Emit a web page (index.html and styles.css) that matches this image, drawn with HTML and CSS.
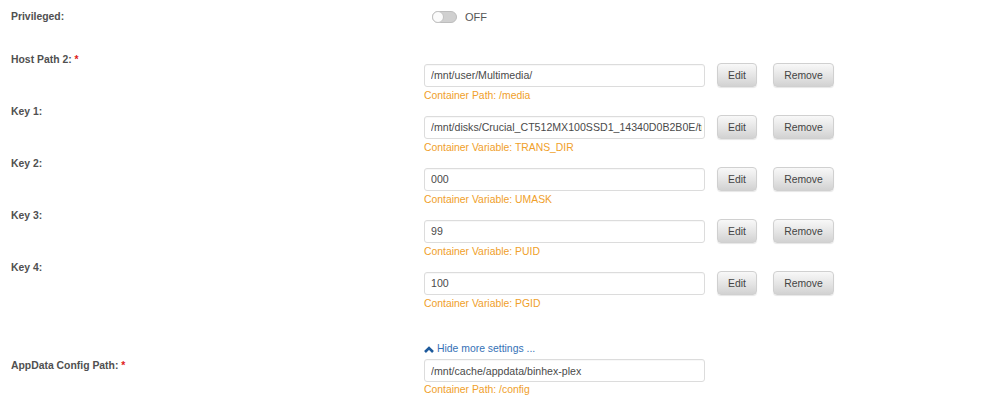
FILE: index.html
```html
<!DOCTYPE html>
<html>
<head>
  <title>Docker Container Settings</title>
  <link rel="stylesheet" href="styles.css">
</head>
<body>
  <div class="form">
    <div class="row row-privileged">
      <div class="label">Privileged:</div>
      <div class="field field-toggle">
        <span class="switch"><span class="knob"></span></span>
        <span class="switch-text">OFF</span>
      </div>
    </div>

    <div class="row row-config">
      <div class="label">Host Path 2: <span class="req">*</span></div>
      <div class="field">
        <div class="controls">
          <input class="text" type="text" value="/mnt/user/Multimedia/">
          <button class="btn btn-edit">Edit</button>
          <button class="btn btn-remove">Remove</button>
        </div>
        <div class="note">Container Path: /media</div>
      </div>
    </div>

    <div class="row row-config">
      <div class="label">Key 1:</div>
      <div class="field">
        <div class="controls">
          <input class="text" type="text" value="/mnt/disks/Crucial_CT512MX100SSD1_14340D0B2B0E/transcode">
          <button class="btn btn-edit">Edit</button>
          <button class="btn btn-remove">Remove</button>
        </div>
        <div class="note">Container Variable: TRANS_DIR</div>
      </div>
    </div>

    <div class="row row-config">
      <div class="label">Key 2:</div>
      <div class="field">
        <div class="controls">
          <input class="text" type="text" value="000">
          <button class="btn btn-edit">Edit</button>
          <button class="btn btn-remove">Remove</button>
        </div>
        <div class="note">Container Variable: UMASK</div>
      </div>
    </div>

    <div class="row row-config">
      <div class="label">Key 3:</div>
      <div class="field">
        <div class="controls">
          <input class="text" type="text" value="99">
          <button class="btn btn-edit">Edit</button>
          <button class="btn btn-remove">Remove</button>
        </div>
        <div class="note">Container Variable: PUID</div>
      </div>
    </div>

    <div class="row row-config">
      <div class="label">Key 4:</div>
      <div class="field">
        <div class="controls">
          <input class="text" type="text" value="100">
          <button class="btn btn-edit">Edit</button>
          <button class="btn btn-remove">Remove</button>
        </div>
        <div class="note">Container Variable: PGID</div>
      </div>
    </div>

    <div class="row row-more">
      <div class="label"></div>
      <div class="field">
        <a class="more-link" href="#">
          <svg class="chevron" width="10" height="7" viewBox="0 0 10 7">
            <path d="M1 6 L5 2 L9 6" fill="none" stroke="#1e5a9c" stroke-width="2.6"/>
          </svg>Hide more settings ...</a>
      </div>
    </div>

    <div class="row row-path">
      <div class="label">AppData Config Path: <span class="req">*</span></div>
      <div class="field">
        <input class="text" type="text" value="/mnt/cache/appdata/binhex-plex">
        <div class="note">Container Path: /config</div>
      </div>
    </div>
  </div>
</body>
</html>
```

FILE: styles.css
```css
* {
  margin: 0;
  padding: 0;
  box-sizing: border-box;
}

body {
  font-family: 'Liberation Sans', Arial, sans-serif;
  font-size: 10.4px;
  color: #505050;
  background: #ffffff;
  width: 1000px;
  height: 409px;
  overflow: hidden;
}

.form {
  padding: 9px 0 0 11px;
}

.row {
  display: flex;
}

.label {
  width: 413px;
  flex-shrink: 0;
  font-weight: bold;
  line-height: 16px;
  color: #505050;
}

.req {
  color: #e01b1b;
}

/* Privileged switch */
.row-privileged {
  height: 43px;
}

.field-toggle {
  display: flex;
  align-items: center;
  height: 16px;
  padding-left: 8px;
}

.switch {
  display: inline-block;
  position: relative;
  width: 25px;
  height: 12px;
  border-radius: 6px;
  background: #d0d0d0;
  border: 1px solid #bdbdbd;
}

.knob {
  position: absolute;
  top: -1px;
  left: -1px;
  width: 12px;
  height: 12px;
  border-radius: 50%;
  background: #fbfbfb;
  border: 1px solid #c2c2c2;
}

.switch-text {
  margin-left: 8px;
  font-size: 11px;
  color: #555;
}

/* Config rows */
.row-config {
  height: 52px;
}

.row-config .field {
  padding-top: 11px;
}

.controls {
  display: flex;
  align-items: center;
  height: 24px;
}

.text {
  width: 281px;
  height: 23px;
  padding: 0 2px 0 6px;
  font-family: 'Liberation Sans', Arial, sans-serif;
  font-size: 10.6px;
  color: #4a4a4a;
  background: #fff;
  border: 1px solid #dcdcdc;
  border-radius: 3px;
  box-shadow: inset 0 1px 1px rgba(0, 0, 0, 0.03);
  outline: none;
}

.btn {
  height: 24px;
  font-family: 'Liberation Sans', Arial, sans-serif;
  font-size: 10.4px;
  color: #444;
  background: linear-gradient(to bottom, #f8f8f8 0%, #e4e4e4 55%, #d2d2d2 100%);
  border: 1px solid #d0d0d0;
  border-radius: 4px;
  box-shadow: 0 1px 1px rgba(0, 0, 0, 0.1);
  cursor: pointer;
}

.btn-edit {
  width: 40px;
  margin-left: 12px;
}

.btn-remove {
  width: 61px;
  margin-left: 16px;
}

.note {
  margin-top: 2px;
  line-height: 13px;
  color: #f0a02a;
}

/* Show / hide link */
.row-more {
  margin-top: 29px;
  height: 17px;
}

.more-link {
  display: flex;
  align-items: center;
  line-height: 16px;
  color: #3571b6;
  text-decoration: none;
}

.chevron {
  margin: 0 3px 0 0;
}

/* AppData */
.row-path .field {
  padding-top: 1px;
}

.row-path .note {
  margin-top: 1px;
}
```
